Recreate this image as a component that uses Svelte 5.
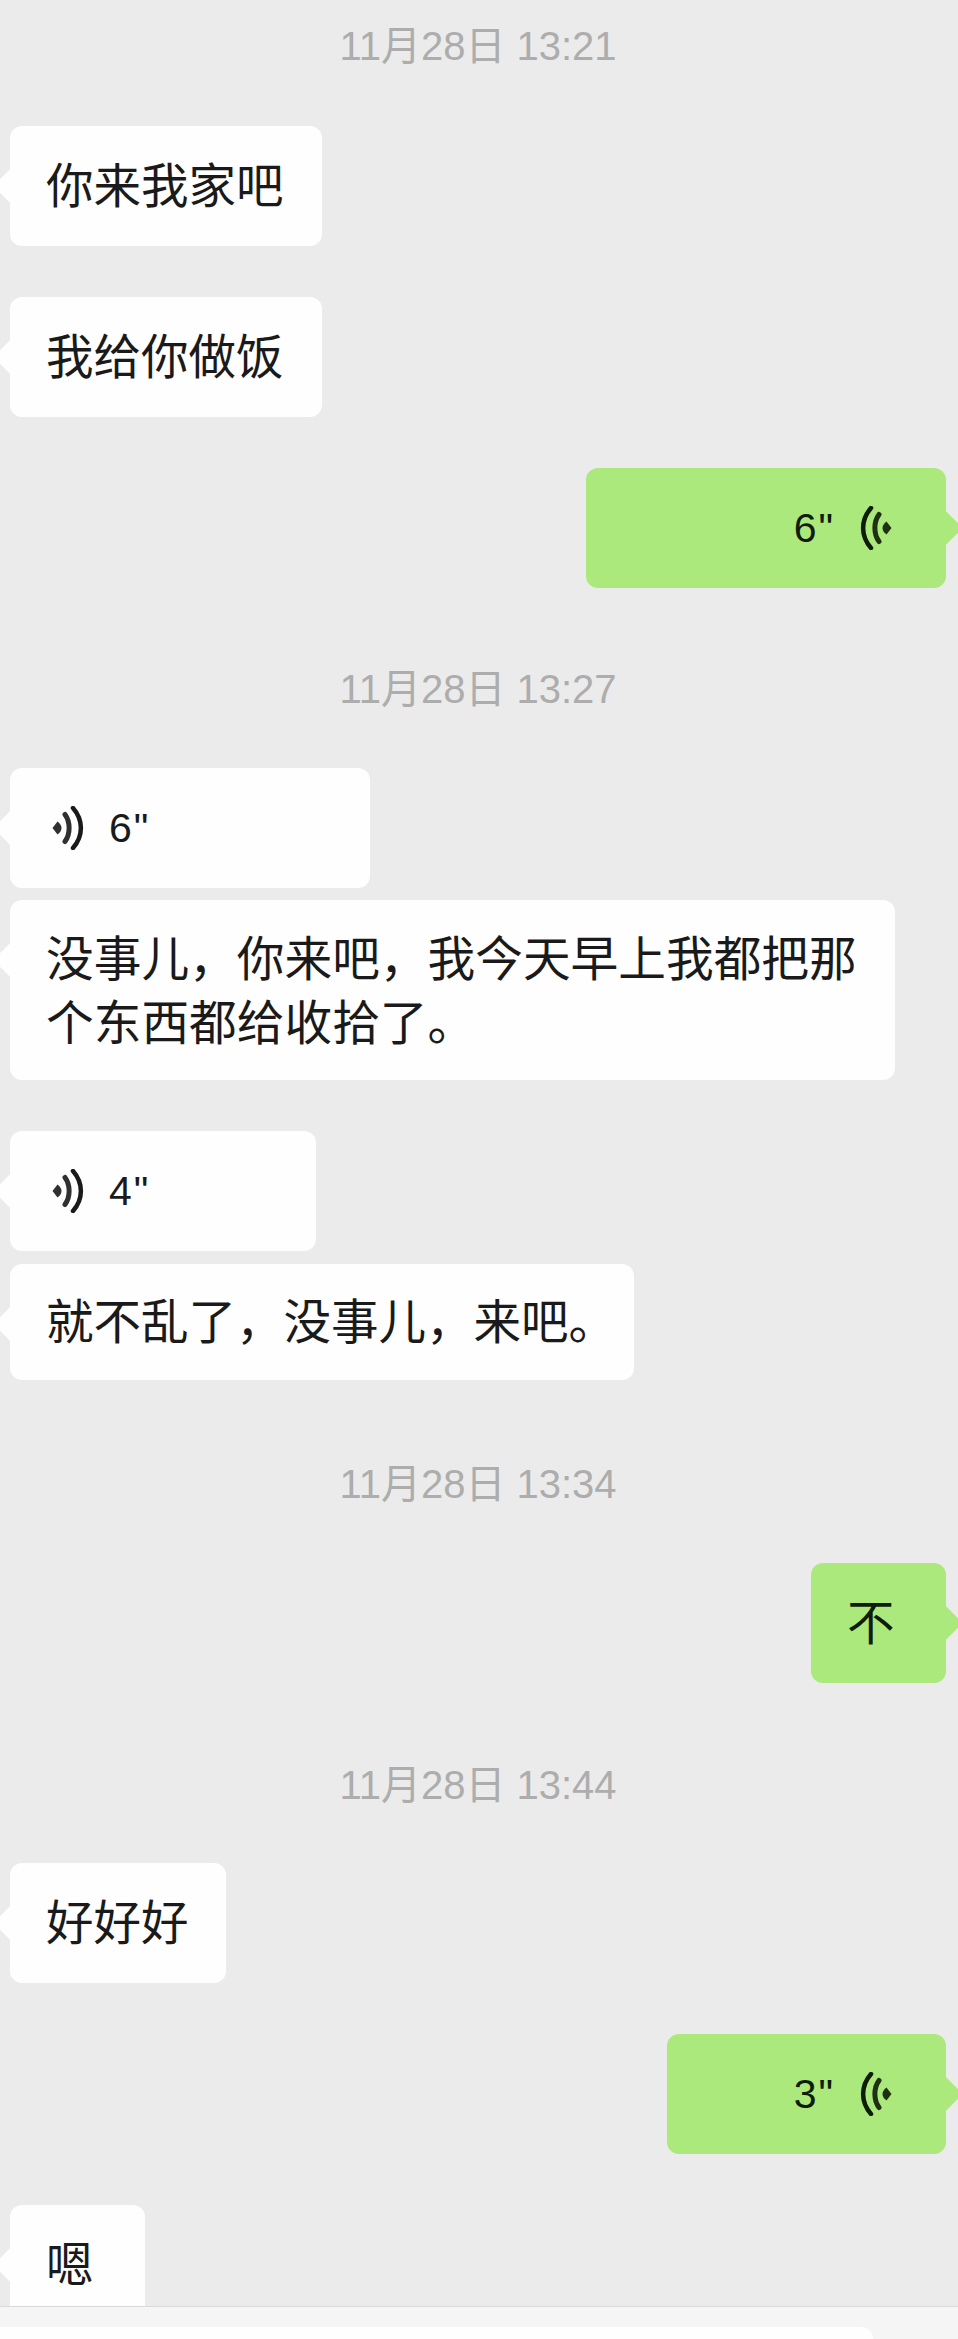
<script>
  const items = [
    { t: 'time', text: '11月28日 13:21', top: 18 },
    { t: 'text', side: 'left', text: '你来我家吧', width: 312, top: 52 },
    { t: 'text', side: 'left', text: '我给你做饭', width: 312, top: 51 },
    { t: 'voice', side: 'right', sec: '6"', width: 360, top: 51 },
    { t: 'time', text: '11月28日 13:27', top: 73 },
    { t: 'voice', side: 'left', sec: '6"', width: 360, top: 51 },
    { t: 'text', side: 'left', text: '没事儿，你来吧，我今天早上我都把那个东西都给收拾了。', width: 885, top: 12, long: true },
    { t: 'voice', side: 'left', sec: '4"', width: 306, top: 51 },
    { t: 'text', side: 'left', text: '就不乱了，没事儿，来吧。', width: 624, top: 13, short: true },
    { t: 'time', text: '11月28日 13:34', top: 76 },
    { t: 'text', side: 'right', text: '不', top: 51 },
    { t: 'time', text: '11月28日 13:44', top: 74 },
    { t: 'text', side: 'left', text: '好好好', width: 216, top: 50 },
    { t: 'voice', side: 'right', sec: '3"', width: 279, top: 51 },
    { t: 'text', side: 'left', text: '嗯', top: 51 }
  ];
</script>

<div class="page">
  <main class="chat">
    {#each items as m}
      {#if m.t === 'time'}
        <div class="time" style="margin-top:{m.top}px">{m.text}</div>
      {:else}
        <div class="row {m.side}" style="margin-top:{m.top}px">
          {#if m.t === 'text'}
            <div class="bubble {m.side}" class:short={m.short} class:long={m.long} style={m.width ? `width:${m.width}px` : ''}>{m.text}</div>
          {:else}
            <div class="bubble voice {m.side}" style="width:{m.width}px">
              <svg class="wave" viewBox="0 0 32 44" width="32" height="44" aria-hidden="true">
                <path class="dot" d="M0.5 22 L5.5 15.5 Q9.5 18.5 9.5 22 Q9.5 25.5 5.5 28.5 Z" />
                <path class="mid" d="M13 8.5 C18.5 16 18.5 28 13 35.5" />
                <path class="out" d="M21 2 C31.5 14 31.5 30 21 42" />
              </svg>
              <span class="sec">{m.sec}</span>
            </div>
          {/if}
        </div>
      {/if}
    {/each}
  </main>
  <footer class="bar"><div class="input"></div></footer>
</div>

<style>
  :global(body) {
    margin: 0;
    background: #ebebeb;
  }
  .page {
    height: 2339px;
    display: flex;
    flex-direction: column;
    overflow: hidden;
    font-family: "Noto Sans CJK SC", "Liberation Sans", sans-serif;
  }
  .chat {
    height: 2306px;
    flex: none;
    overflow: hidden;
    padding: 0 12px 0 10px;
    box-sizing: border-box;
    display: flex;
    flex-direction: column;
    background: #ebebeb;
  }
  .time {
    text-align: center;
    font-family: "Liberation Sans", "Noto Sans CJK SC", sans-serif;
    font-size: 40px;
    line-height: 56px;
    color: #adadad;
    flex: none;
  }
  .row {
    display: flex;
    flex: none;
  }
  .row.right {
    justify-content: flex-end;
  }
  .bubble {
    position: relative;
    box-sizing: border-box;
    border-radius: 12px;
    padding: 27px 36px 33px;
    font-size: 47.5px;
    line-height: 60px;
    color: #1a1a1a;
    height: 120px;
    min-width: 135px;
    white-space: nowrap;
  }
  .bubble.short {
    height: 116px;
    padding: 25px 36px 31px;
  }
  .bubble.long {
    height: 180px;
    padding: 24px 36px 28px;
    font-size: 47.7px;
    line-height: 64px;
    white-space: normal;
  }
  .bubble.left {
    background: #fefefe;
  }
  .bubble.right {
    background: #ace97c;
    color: #0f1c08;
  }
  .bubble::before {
    content: "";
    position: absolute;
    top: 46px;
    width: 28px;
    height: 28px;
    background: inherit;
    border-radius: 4px;
    transform: rotate(45deg);
  }
  .bubble.left::before {
    left: -11px;
  }
  .bubble.right::before {
    right: -11px;
  }
  .voice {
    display: flex;
    align-items: center;
    padding: 0 42px;
    gap: 25px;
  }
  .voice.right {
    flex-direction: row-reverse;
    padding: 0 54px;
    gap: 25px;
  }
  .voice.right .wave {
    transform: scaleX(-1);
  }
  .sec {
    font-family: "Liberation Sans", sans-serif;
    font-size: 41px;
    line-height: 44px;
    letter-spacing: 2px;
  }
  .wave {
    flex: none;
  }
  .dot {
    fill: currentColor;
    opacity: 0.9;
  }
  .mid,
  .out {
    fill: none;
    stroke: currentColor;
    stroke-linecap: round;
  }
  .mid {
    stroke-width: 5;
    opacity: 0.9;
  }
  .out {
    stroke-width: 4.5;
  }
  .bar {
    height: 33px;
    flex: none;
    box-sizing: border-box;
    border-top: 1px solid #d9d9d9;
    background: #f5f5f5;
    padding: 20px 85px 0 0;
  }
  .input {
    height: 40px;
    background: #fefefe;
    border-radius: 0 12px 0 0;
  }
</style>
